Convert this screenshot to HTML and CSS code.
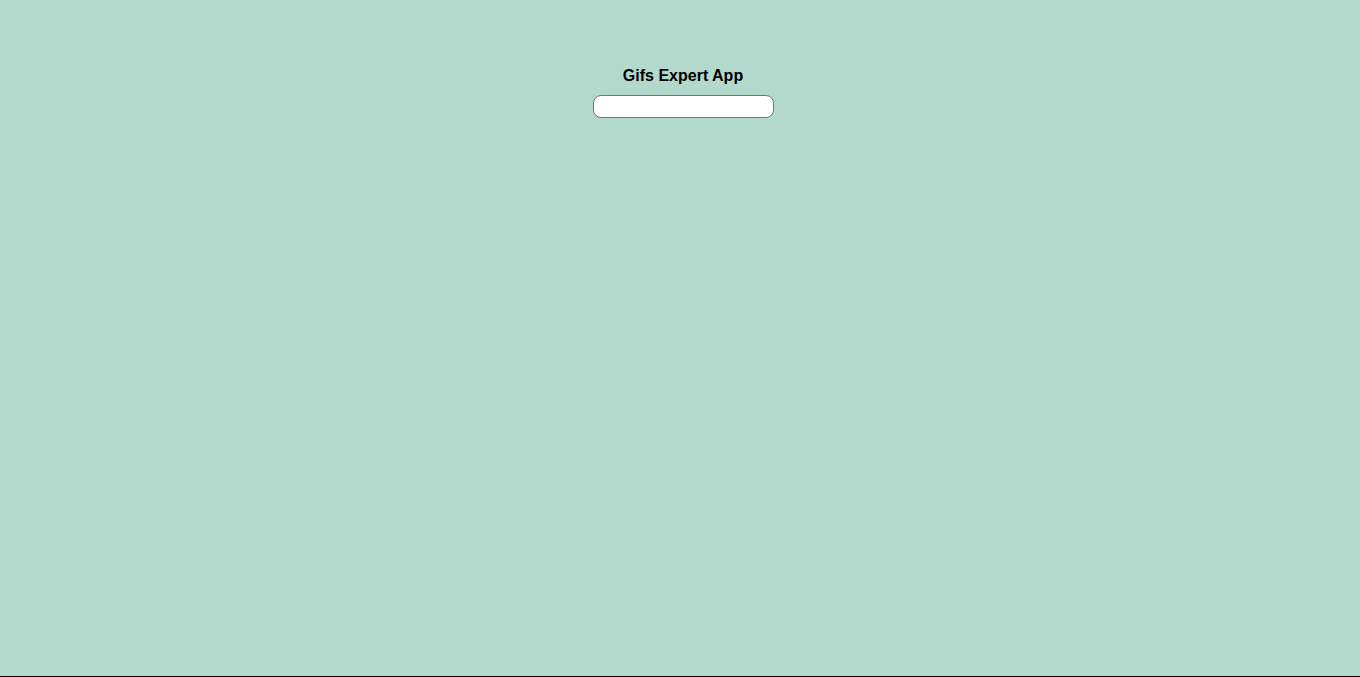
FILE: index.html
```html
<!DOCTYPE html>
<html lang="en">
<head>
<meta charset="utf-8">
<title>Gifs Expert App</title>
<link rel="stylesheet" href="styles.css">
</head>
<body>
<div class="app">
  <h3 class="title">Gifs Expert App</h3>
  <form class="search">
    <input class="search-input" type="text">
  </form>
</div>
</body>
</html>
```
FILE: styles.css
```css
html, body {
  margin: 0;
  padding: 0;
}
body {
  background: #b3d8cc;
  font-family: "Liberation Sans", Arial, sans-serif;
}
.app {
  box-sizing: border-box;
  height: 677px;
  border-bottom: 1px solid #000;
  display: flex;
  flex-direction: column;
  align-items: center;
  padding-top: 67px;
  padding-left: 6px;
}
.title {
  margin: 0;
  font-size: 16px;
  line-height: 18px;
  font-weight: bold;
  color: #000;
}
.search {
  margin-top: 10px;
}
.search-input {
  box-sizing: border-box;
  width: 181px;
  height: 23px;
  border: 1px solid #767676;
  border-radius: 8px;
  background: #fff;
  margin: 0;
  padding: 1px 6px;
  font-family: "Liberation Sans", Arial, sans-serif;
  font-size: 13px;
}
```
